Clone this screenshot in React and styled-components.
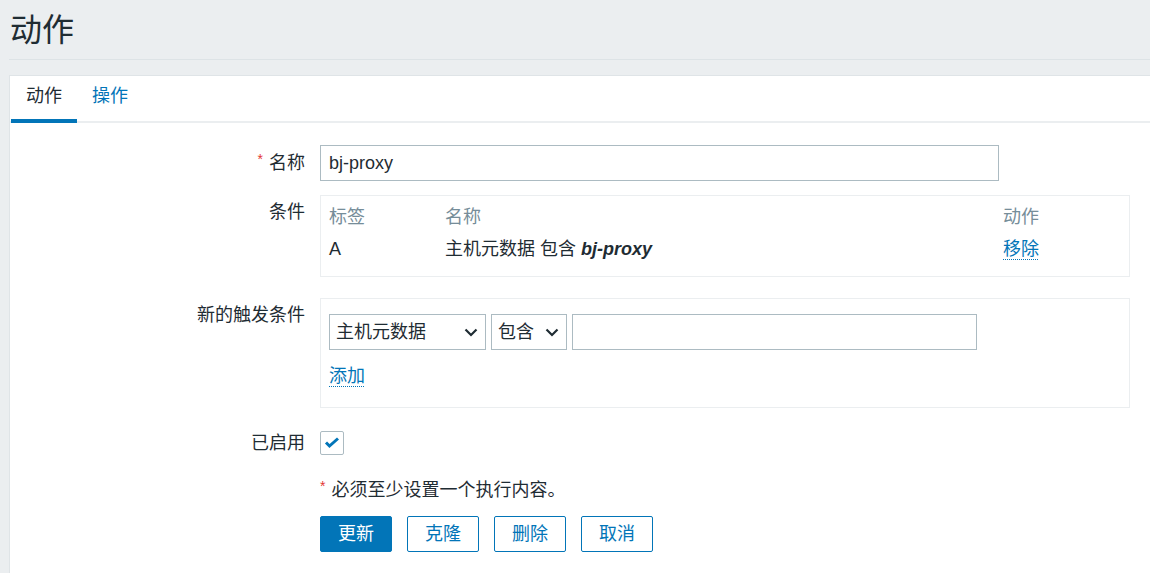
import React from "react";
import styled, { createGlobalStyle } from "styled-components";

const Global = createGlobalStyle`
  html, body { margin: 0; padding: 0; }
  body {
    background: #ebeef0;
    color: #1f2c33;
    font-family: "Liberation Sans", Arial, "Noto Sans CJK SC", sans-serif;
    font-size: 18px;
    line-height: 24px;
  }
  * { box-sizing: border-box; }
`;

const Page = styled.div`
  padding-left: 9px;
  overflow: hidden;
`;

const Header = styled.header`
  height: 60px;
  border-bottom: 1px solid #dde3e6;
  display: flex;
  align-items: center;
`;

const Title = styled.h1`
  margin: 0 0 0 1px;
  font-size: 32px;
  font-weight: normal;
  line-height: 40px;
  color: #1f2c33;
`;

const Panel = styled.section`
  margin-top: 15px;
  background: #fff;
  border: 1px solid #dfe4e7;
  border-right: none;
  padding-bottom: 40px;
`;

const TabBar = styled.nav`
  display: flex;
  height: 47px;
  border-bottom: 2px solid #ebeef0;
  padding-left: 1px;
`;

const Tab = styled.a`
  display: flex;
  align-items: center;
  padding: 0 15px 4px 15px;
  margin-bottom: -2px;
  color: ${(p) => (p.$active ? "#1f2c33" : "#0275b8")};
  border-bottom: 4px solid ${(p) => (p.$active ? "#0275b8" : "transparent")};
  cursor: pointer;
`;

const Form = styled.div`
  padding-top: 22px;
  display: flex;
  flex-direction: column;
`;

const Row = styled.div`
  display: grid;
  grid-template-columns: 310px 1fr;
  margin-top: ${(p) => p.$mt || 0}px;
  align-items: ${(p) => (p.$top ? "start" : "center")};
`;

const Label = styled.div`
  text-align: right;
  padding-right: 15px;
  padding-top: ${(p) => (p.$top ? 5 : 0)}px;
  white-space: nowrap;
`;

const Req = styled.span`
  color: #e33734;
  font-size: 14px;
  margin-right: 6px;
  position: relative;
  top: -5px;
`;

const Field = styled.div`
  display: flex;
  align-items: center;
`;

const TextInput = styled.div`
  width: ${(p) => p.$w}px;
  height: 36px;
  border: 1px solid #acbbc2;
  padding: 0 8px;
  display: flex;
  align-items: center;
  background: #fff;
  color: #1f2c33;
`;

const Box = styled.div`
  width: 810px;
  border: 1px solid #ebeef0;
  padding: ${(p) => p.$pad};
`;

const CondGrid = styled.div`
  display: grid;
  grid-template-columns: 116px 1fr 117px;
`;

const Cell = styled.div`
  padding: 4px 0;
  color: ${(p) => (p.$head ? "#768d99" : "#1f2c33")};
`;

const Link = styled.a`
  color: #0275b8;
  text-decoration-line: underline;
  text-decoration-style: dotted;
  text-decoration-thickness: 1px;
  text-underline-offset: 4px;
  cursor: pointer;
`;

const Strong = styled.b`
  font-style: italic;
`;

const Select = styled.div`
  width: ${(p) => p.$w}px;
  height: 36px;
  border: 1px solid #acbbc2;
  display: flex;
  align-items: center;
  justify-content: space-between;
  padding: 0 7px 0 6px;
  margin-right: 5px;
  background: #fff;
`;

const Chevron = () => (
  <svg width="14" height="9" viewBox="0 0 14 9">
    <polyline points="1.5,1.5 7,7 12.5,1.5" fill="none" stroke="#1f2c33" strokeWidth="2.2" />
  </svg>
);

const AddLine = styled.div`
  margin-top: 14px;
`;

const Check = styled.div`
  width: 24px;
  height: 24px;
  border: 1px solid #acbbc2;
  border-radius: 2px;
  display: flex;
  align-items: center;
  justify-content: center;
  background: #fff;
`;

const Buttons = styled.div`
  display: flex;
  gap: 15px;
`;

const Button = styled.button`
  width: 72px;
  height: 36px;
  border-radius: 2px;
  border: 1px solid #0275b8;
  background: ${(p) => (p.$primary ? "#0275b8" : "#fff")};
  color: ${(p) => (p.$primary ? "#fff" : "#0275b8")};
  font: inherit;
  padding: 0;
  cursor: pointer;
`;

const Empty = styled.div``;

export default function App() {
  return (
    <Page>
      <Global />
      <Header>
        <Title>动作</Title>
      </Header>
      <Panel>
        <TabBar>
          <Tab $active>动作</Tab>
          <Tab>操作</Tab>
        </TabBar>
        <Form>
          <Row>
            <Label>
              <Req>*</Req>名称
            </Label>
            <Field>
              <TextInput $w={679}>bj-proxy</TextInput>
            </Field>
          </Row>

          <Row $mt={14} $top>
            <Label $top>条件</Label>
            <Box $pad="5px 9px 11px 8px">
              <CondGrid>
                <Cell $head>标签</Cell>
                <Cell $head>名称</Cell>
                <Cell $head>动作</Cell>
                <Cell>A</Cell>
                <Cell>
                  主机元数据 包含 <Strong>bj-proxy</Strong>
                </Cell>
                <Cell>
                  <Link>移除</Link>
                </Cell>
              </CondGrid>
            </Box>
          </Row>

          <Row $mt={21} $top>
            <Label $top>新的触发条件</Label>
            <Box $pad="15px 8px 19px 8px">
              <Field>
                <Select $w={157}>
                  <span>主机元数据</span>
                  <Chevron />
                </Select>
                <Select $w={76}>
                  <span>包含</span>
                  <Chevron />
                </Select>
                <TextInput $w={405} />
              </Field>
              <AddLine>
                <Link>添加</Link>
              </AddLine>
            </Box>
          </Row>

          <Row $mt={23}>
            <Label>已启用</Label>
            <Field>
              <Check>
                <svg width="16" height="12" viewBox="0 0 16 12">
                  <polyline points="2,5.5 5.5,9 14,1.5" fill="none" stroke="#0275b8" strokeWidth="3" />
                </svg>
              </Check>
            </Field>
          </Row>

          <Row $mt={23}>
            <Empty />
            <div>
              <Req>*</Req>必须至少设置一个执行内容。
            </div>
          </Row>

          <Row $mt={13}>
            <Empty />
            <Buttons>
              <Button $primary>更新</Button>
              <Button>克隆</Button>
              <Button>删除</Button>
              <Button>取消</Button>
            </Buttons>
          </Row>
        </Form>
      </Panel>
    </Page>
  );
}
